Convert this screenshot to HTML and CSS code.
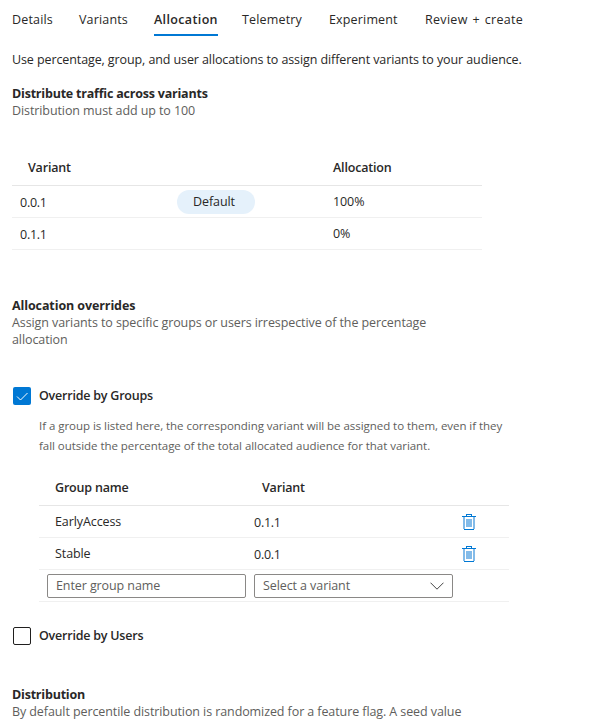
FILE: index.html
```html
<!DOCTYPE html>
<html lang="en">
<head>
<meta charset="utf-8">
<title>Allocation</title>
<link rel="stylesheet" href="styles.css">
</head>
<body>
<svg class="defs" width="0" height="0" aria-hidden="true">
  <symbol id="trash" viewBox="0 0 14 16">
    <path fill="#0078d4" d="M4 0h6v2h4v1H0V2h4zM5 1v1h4V1zM2 15h10v1H2z"/>
    <path fill="#83bbe9" d="M1 3h2v12H1zM11 3h2v12h-2zM4 5h6v8H4z"/>
  </symbol>
</svg>
<nav class="tabs">
  <a class="tab">Details</a>
  <a class="tab">Variants</a>
  <a class="tab active"><span>Allocation</span></a>
  <a class="tab">Telemetry</a>
  <a class="tab">Experiment</a>
  <a class="tab review">Review + create</a>
</nav>
<main>
  <p class="intro">Use percentage, group, and user allocations to assign different variants to your audience.</p>

  <section class="traffic">
    <h2>Distribute traffic across variants</h2>
    <p class="sub">Distribution must add up to 100</p>
    <div class="table variants">
      <div class="row head"><span>Variant</span><span></span><span>Allocation</span></div>
      <div class="row"><span class="version">0.0.1</span><span><b class="pill">Default</b></span><span>100%</span></div>
      <div class="row"><span class="version">0.1.1</span><span></span><span>0%</span></div>
    </div>
  </section>

  <section class="overrides">
    <h2 class="overrides-title">Allocation overrides</h2>
    <p class="sub">Assign variants to specific groups or users irrespective of the percentage<br>allocation</p>
    <div class="check by-groups">
      <span class="box checked"><svg width="18" height="18" viewBox="0 0 18 18"><path d="M4 9.5 7.5 13 14.5 6" fill="none" stroke="#fff" stroke-width="1"/></svg></span>
      <span class="label">Override by Groups</span>
    </div>
    <p class="help">If a group is listed here, the corresponding variant will be assigned to them, even if they<br>fall outside the percentage of the total allocated audience for that variant.</p>
    <div class="table groups">
      <div class="row head"><span>Group name</span><span>Variant</span></div>
      <div class="row"><span>EarlyAccess</span><span class="version">0.1.1</span><svg class="trash" width="14" height="16"><use href="#trash"/></svg></div>
      <div class="row"><span>Stable</span><span class="version">0.0.1</span><svg class="trash" width="14" height="16"><use href="#trash"/></svg></div>
      <div class="row entry">
        <div class="field">Enter group name</div>
        <div class="field select"><span>Select a variant</span><svg width="14" height="8" viewBox="0 0 14 8"><path d="M.5.7 7 7.2 13.5.7" fill="none" stroke="#444"/></svg></div>
      </div>
    </div>
    <div class="check by-users"><span class="box"></span><span class="label">Override by Users</span></div>
  </section>

  <section class="distribution">
    <h2>Distribution</h2>
    <p class="sub">By default percentile distribution is randomized for a feature flag. A seed value</p>
  </section>
</main>
</body>
</html>
```
FILE: styles.css
```css
* { box-sizing: border-box; }
body {
  margin: 0;
  height: 723px;
  overflow: hidden;
  background: #fff;
  color: #292827;
  font: 12.5px/17px "Open Sans", "Noto Sans", sans-serif;
  letter-spacing: -0.09px;
}
.defs { display: block; }
h2, p { margin: 0; }
h2 { font-size: 12.5px; line-height: 17px; font-weight: 700; letter-spacing: -0.21px; }
.overrides-title { letter-spacing: -0.1px; }
.tabs {
  display: grid;
  grid-template-columns: 67px 75px 88px 87px 96px auto;
  height: 36px;
  padding: 11px 0 0 12px;
  white-space: nowrap;
  letter-spacing: 0.16px;
}
.review { letter-spacing: 0.3px; word-spacing: 1.3px; }
.active { font-weight: 600; letter-spacing: 0.36px; }
.active span { display: block; width: 64px; height: 25px; border-bottom: 2px solid #0078d4; }
main { padding: 15px 12px 0; white-space: nowrap; }
.intro { letter-spacing: -0.1px; }
.sub { color: #605e5c; }
.traffic { padding-top: 17px; }
.row { display: grid; height: 32px; align-items: center; border-bottom: 1px solid #f0f0f0; }
.head { font-weight: 600; letter-spacing: -0.18px; border-color: #e6e6e6; }
.variants { width: 470px; margin-top: 31px; }
.variants .row { grid-template-columns: 157px 156px auto; padding-left: 8px; }
.variants .head { height: 36px; }
.head span:first-child { padding-left: 8px; }
.version { padding-top: 2px; letter-spacing: -0.25px; }
.pill { display: block; width: 78px; height: 24px; padding-left: 16px; border-radius: 12px; background: #e5f1fb; font-weight: 400; line-height: 23px; }
.overrides { padding-top: 47px; }
.check { display: flex; align-items: center; gap: 8px; height: 18px; padding-left: 1px; font-weight: 600; letter-spacing: -0.22px; }
.label { padding-bottom: 2px; }
.by-groups { margin-top: 39px; }
.box { width: 18px; height: 18px; border: 1px solid #201f1e; border-radius: 2px; }
.checked { border: 0; background: #0078d4; }
.box svg { display: block; }
.help { margin: 11px 0 0 27px; color: #605e5c; font-size: 11.5px; line-height: 20px; letter-spacing: -0.045px; }
.groups { width: 470px; margin: 14px 0 0 27px; }
.groups .row { grid-template-columns: 199px 208px auto; padding-left: 16px; }
.groups .head { height: 36px; }
.groups .head span { padding-left: 0; }
.groups .head span + span { padding-left: 8px; }
.groups .entry { grid-template-columns: 199px 199px; gap: 8px; padding-left: 8px; }
.field { height: 24px; padding-left: 8px; border: 1px solid #8a8886; border-radius: 2px; color: #605e5c; line-height: 21px; }
.select { display: flex; align-items: center; justify-content: space-between; padding-right: 8px; line-height: 23px; }
.by-users { margin-top: 25px; }
.distribution { padding-top: 41px; }
```
